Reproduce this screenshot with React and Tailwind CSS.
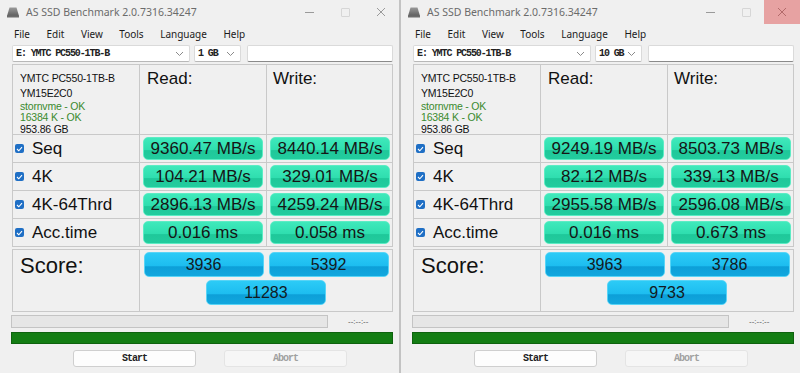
import React from 'react'

const sans = "font-['Liberation_Sans',Arial,sans-serif]"
const ui = "font-['Noto_Sans',sans-serif]"
const mono = "font-['Liberation_Mono',monospace]"

const left = {
  size: '1 GB',
  rows: [
    ['Seq', '9360.47 MB/s', '8440.14 MB/s'],
    ['4K', '104.21 MB/s', '329.01 MB/s'],
    ['4K-64Thrd', '2896.13 MB/s', '4259.24 MB/s'],
    ['Acc.time', '0.016 ms', '0.058 ms'],
  ],
  score: ['3936', '5392', '11283'],
}

const right = {
  size: '10 GB',
  rows: [
    ['Seq', '9249.19 MB/s', '8503.73 MB/s'],
    ['4K', '82.12 MB/s', '339.13 MB/s'],
    ['4K-64Thrd', '2955.58 MB/s', '2596.08 MB/s'],
    ['Acc.time', '0.016 ms', '0.673 ms'],
  ],
  score: ['3963', '3786', '9733'],
}

const Chevron = () => (
  <svg width="9" height="6" viewBox="0 0 9 6" className="shrink-0">
    <path d="M1 1l3.5 3.5L8 1" fill="none" stroke="#8a8a8a" strokeWidth="1" />
  </svg>
)

const TitleBar = ({ hot }) => (
  <div className="h-[24px] flex items-center">
    {/* app icon */}
    <svg width="14" height="12" viewBox="0 0 14 12" className="ml-[6px]">
      <defs>
        <linearGradient id="dg" x1="0" y1="0" x2="0" y2="1">
          <stop offset="0" stopColor="#9a9a9a" />
          <stop offset="1" stopColor="#5e5e5e" />
        </linearGradient>
      </defs>
      <path d="M3.5 1.5h7L13 10H1z" fill="url(#dg)" />
      <rect x="1" y="9.5" width="12" height="2" fill="#6c6c6c" />
    </svg>
    <span className={`${ui} ml-[6px] mt-[1px] text-[10.5px] text-[#6b6b6b]`}>AS SSD Benchmark 2.0.7316.34247</span>
    <div className="ml-auto flex h-full">
      <div className="w-[36px] flex items-center justify-center">
        <div className="w-[9px] h-px bg-[#9a9a9a]" />
      </div>
      <div className="w-[36px] flex items-center justify-center">
        <div className="w-[9px] h-[9px] border border-[#d6d6d6] rounded-[1px]" />
      </div>
      <div className={`w-[36px] flex items-center justify-center ${hot ? 'bg-[#e7a2a2]' : ''}`}>
        <svg width="10" height="10" viewBox="0 0 10 10">
          <path d="M1 1l8 8M9 1l-8 8" stroke={hot ? '#b36a6a' : '#9a9a9a'} strokeWidth="1" />
        </svg>
      </div>
    </div>
  </div>
)

const Menu = () => (
  <div className={`${ui} h-[20px] flex items-center pl-[14px] gap-[16.5px] text-[10px] text-[#1b1b1b]`}>
    <span>File</span>
    <span>Edit</span>
    <span>View</span>
    <span>Tools</span>
    <span>Language</span>
    <span>Help</span>
  </div>
)

const Toolbar = ({ size }) => (
  <div className={`${mono} mt-[1px] h-[17px] flex text-[10px] font-bold tracking-[-1.1px] text-[#222]`}>
    <div className="ml-[12px] w-[178px] bg-white border border-[#dadada] border-b-[#b8b8b8] rounded-[2px] flex items-center pl-[3px] pr-[5px]">
      <span>E: YMTC PC550-1TB-B</span>
      <span className="ml-auto"><Chevron /></span>
    </div>
    <div className="ml-[4px] w-[47px] bg-white border border-[#dadada] border-b-[#b8b8b8] rounded-[2px] flex items-center pl-[3px] pr-[5px]">
      <span>{size}</span>
      <span className="ml-auto"><Chevron /></span>
    </div>
    <div className="ml-[6px] w-[146px] bg-white border border-[#dadada] border-b-[#8a8a8a] rounded-[2px]" />
  </div>
)

const Green = ({ children }) => (
  <div className="w-[120px] h-[23px] rounded-[5px] border border-[#5cecc4] bg-[linear-gradient(to_bottom,#3fe9bb_0%,#2fdeaf_55%,#1fc89a_60%,#22cc9e_100%)] flex items-center justify-center text-[17px] text-[#151515] leading-none">
    {children}
  </div>
)

const Blue = ({ children }) => (
  <div className="w-[120px] h-[25px] rounded-[5px] border border-[#58d4f6] bg-[linear-gradient(to_bottom,#2ccbf6_0%,#1dbdf0_55%,#0d9fd8_60%,#11a7de_100%)] flex items-center justify-center text-[16px] text-[#121a22] leading-none">
    {children}
  </div>
)

const Check = () => (
  <div className="w-[9px] h-[9px] rounded-[2px] bg-[#1f6fc5] flex items-center justify-center">
    <svg width="7" height="6" viewBox="0 0 7 6">
      <path d="M1 3l1.8 1.8L6 1.2" fill="none" stroke="#fff" strokeWidth="1.1" />
    </svg>
  </div>
)

const Table = ({ rows }) => (
  <div className={`${sans} ml-[12px] mt-[2px] w-[381px] grid grid-cols-[127px_127px_126px] border-l border-t border-[#c9c9c9]`}>
    <div className="h-[70px] border-r border-b border-[#c9c9c9] pl-[7px] pt-[6px] text-[10.5px] tracking-[-0.2px]">
      <div className="leading-[15px] text-[#111]">YMTC PC550-1TB-B</div>
      <div className="leading-[14px] text-[#111]">YM15E2C0</div>
      <div className="leading-[12px] text-[#3a8a2e]">stornvme - OK</div>
      <div className="leading-[11px] text-[#3a8a2e]">16384 K - OK</div>
      <div className="leading-[12px] text-[#111]">953.86 GB</div>
    </div>
    <div className="h-[70px] border-r border-b border-[#c9c9c9] pl-[7px] pt-[1px] text-[17px] text-[#111]">Read:</div>
    <div className="h-[70px] border-r border-b border-[#c9c9c9] pl-[6px] pt-[1px] text-[17px] text-[#111]">Write:</div>
    {rows.map(([label, r, w]) => (
      <React.Fragment key={label}>
        <div className="h-[28px] border-r border-b border-[#c9c9c9] flex items-center pl-[2px] gap-[8px] text-[17px] text-[#111]">
          <Check />
          <span>{label}</span>
        </div>
        <div className="h-[28px] border-r border-b border-[#c9c9c9] flex items-center pl-[3px]">
          <Green>{r}</Green>
        </div>
        <div className="h-[28px] border-r border-b border-[#c9c9c9] flex items-center pl-[3px]">
          <Green>{w}</Green>
        </div>
      </React.Fragment>
    ))}
  </div>
)

const Score = ({ score }) => (
  <div className={`${sans} ml-[12px] mt-[2px] w-[381px] h-[63px] border border-[#c9c9c9] grid grid-cols-[127px_1fr]`}>
    <div className="border-r border-[#c9c9c9] pl-[7px] pt-[5px] text-[22px] leading-none text-[#111]">Score:</div>
    <div className="flex flex-col items-center pt-[2px] gap-[3px]">
      <div className="flex gap-[5px]">
        <Blue>{score[0]}</Blue>
        <Blue>{score[1]}</Blue>
      </div>
      <Blue>{score[2]}</Blue>
    </div>
  </div>
)

const Bottom = () => (
  <>
    <div className="mt-[3px] flex items-center">
      <div className="ml-[11px] w-[317px] h-[13px] bg-[#e6e6e6] border border-[#c4c4c4]" />
      <span className={`${sans} ml-[20px] text-[8px] text-[#555]`}>--:--:--</span>
    </div>
    <div className="mt-[4px] ml-[11px] w-[382px] h-[12px] bg-[#137d13] border border-[#0e620e]" />
    <div className={`${mono} mt-[6px] flex text-[10px] font-bold tracking-[-1px]`}>
      <div className="ml-[73px] w-[123px] h-[17px] bg-[#fdfdfd] border border-[#cfcfcf] rounded-[3px] flex items-center justify-center text-[#222]">Start</div>
      <div className="ml-[28px] w-[123px] h-[17px] bg-[#f6f6f6] border border-[#e4e4e4] rounded-[3px] flex items-center justify-center text-[#a0a0a0]">Abort</div>
    </div>
  </>
)

const Win = ({ data, hot }) => (
  <div className="w-[399px] h-[373px] bg-[#f0f0f0] flex flex-col overflow-hidden">
    <TitleBar hot={hot} />
    <Menu />
    <Toolbar size={data.size} />
    <Table rows={data.rows} />
    <Score score={data.score} />
    <Bottom />
  </div>
)

export default function App() {
  return (
    <div className="w-[800px] h-[373px] flex gap-[2px] bg-[#c3c3c3] overflow-hidden">
      <Win data={left} />
      <Win data={right} hot />
    </div>
  )
}
